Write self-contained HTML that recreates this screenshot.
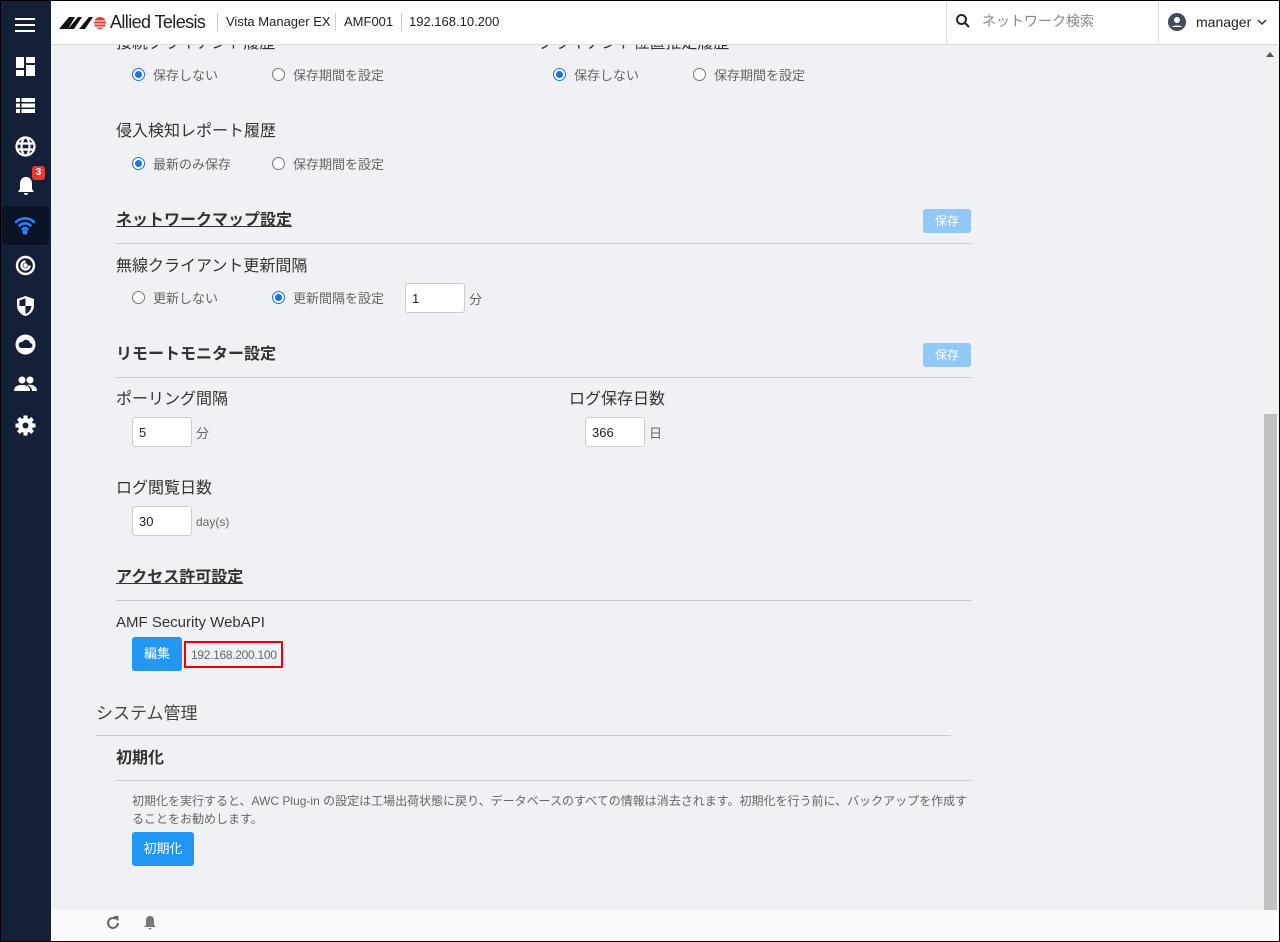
<!DOCTYPE html>
<html><head><meta charset="utf-8"><style>
*{box-sizing:border-box;margin:0;padding:0}
body{width:1280px;height:942px;overflow:hidden;background:#f0f1f5;font-family:"Liberation Sans","Noto Sans CJK JP",sans-serif;position:relative;color:#333;line-height:1.15}
.a{position:absolute;white-space:nowrap}
#side{left:0;top:0;width:51px;height:942px;background:#141f38}
#hdr{left:51px;top:0;width:1229px;height:45px;background:#fff;border-bottom:1px solid #ddd;z-index:5}
.z{z-index:6}
.h{font-size:16px;color:#333;transform:translateY(2px)}
.hb{font-size:16px;font-weight:bold;color:#333;transform:translateY(2px)}
.u{text-decoration:underline}
.r{font-size:13px;color:#666;transform:translateY(2px)}
.rad{position:absolute;width:13px;height:13px;border-radius:50%;border:1px solid #777;background:#fff}
.rad.on{border:1px solid #1a73e8}
.rad.on::after{content:"";position:absolute;left:2px;top:2px;width:7px;height:7px;border-radius:50%;background:#1a73e8}
.line{position:absolute;height:1px;background:#ccc}
.save{position:absolute;width:48px;height:24px;background:#90c8f6;border-radius:3px;color:#fff;font-size:12px;text-align:center;line-height:24px}
.inp{position:absolute;height:30px;background:#fff;border:1px solid #ccc;border-radius:3px;font-size:13px;padding:8px 0 0 6px;color:#222}
.btn{position:absolute;background:#2196f3;color:#fff;border-radius:3px;font-size:13px;text-align:center}
#frame{position:absolute;left:0;top:0;width:1280px;height:942px;border:1px solid #000;z-index:20;pointer-events:none}
</style></head><body>
<div class="a" id="side"></div>
<svg class="a" style="left:15px;top:17px" width="20" height="16"><rect y="1" width="20" height="2" fill="#fff"/><rect y="7" width="20" height="2" fill="#fff"/><rect y="13" width="20" height="2" fill="#fff"/></svg>
<svg class="a" style="left:16px;top:57px" width="19" height="19" fill="#fff"><rect x="0" y="0" width="8" height="11"/><rect x="10" y="0" width="9" height="6"/><rect x="0" y="13" width="8" height="6"/><rect x="10" y="8" width="9" height="11"/></svg>
<svg class="a" style="left:16px;top:98px" width="19" height="15" fill="#fff"><rect width="19" height="4"/><rect y="5.5" width="19" height="4"/><rect y="11" width="19" height="4"/><rect x="4" width="1.5" height="15" fill="#141f38"/></svg>
<svg class="a" style="left:15px;top:136px" width="21" height="21" fill="none" stroke="#fff" stroke-width="2.2"><circle cx="10.5" cy="10.5" r="9"/><ellipse cx="10.5" cy="10.5" rx="4" ry="9"/><line x1="1.5" y1="7.5" x2="19.5" y2="7.5"/><line x1="1.5" y1="13.5" x2="19.5" y2="13.5"/></svg>
<svg class="a" style="left:15px;top:175px" width="22" height="22" fill="#fff"><path d="M11 2c-4 0-6 3-6 7v5l-2 3h16l-2-3V9c0-4-2-7-6-7zM9 18h4a2 2 0 0 1-4 0z"/></svg>
<div class="a" style="left:32px;top:166px;width:13px;height:14px;background:#e53935;border-radius:3px;color:#fff;font-size:10px;font-weight:bold;text-align:center;line-height:14px">3</div>
<div class="a" style="left:2px;top:206px;width:47px;height:39px;background:#0b1326;border-radius:3px"></div>
<svg class="a" style="left:14px;top:215px" width="22" height="20" fill="none" stroke="#2f80ff" stroke-width="2.6" stroke-linecap="round"><path d="M2 7a13 13 0 0 1 18 0"/><path d="M5.5 10.5a8 8 0 0 1 11 0"/><path d="M8.5 14a3.5 3.5 0 0 1 5 0"/><circle cx="11" cy="17" r="1.3" fill="#2f80ff"/></svg>
<svg class="a" style="left:15px;top:255px" width="21" height="21" fill="none" stroke="#fff" stroke-width="2.4"><circle cx="10.5" cy="10.5" r="8.5"/><path d="M10.5 6.5a4 4 0 1 0 4 4"/><circle cx="10.5" cy="10.5" r="1" fill="#fff"/></svg>
<svg class="a" style="left:16px;top:295px" width="19" height="22"><path d="M9.5 1L18 4v6c0 6-4 10-8.5 11C5 20 1 16 1 10V4z" fill="#fff"/><path d="M9.5 11h6c-.5 4-3 7-6 8zM9.5 11h-6V5.5l6-2.3z" fill="#141f38"/></svg>
<svg class="a" style="left:15px;top:334px" width="21" height="21"><circle cx="10.5" cy="10.5" r="10" fill="#fff"/><path d="M6 14h9a2.5 2.5 0 0 0 0-5 4 4 0 0 0-7.5-1A3 3 0 0 0 6 14z" fill="#141f38"/></svg>
<svg class="a" style="left:14px;top:376px" width="23" height="16" fill="#fff"><circle cx="8" cy="4" r="3.5"/><circle cx="16" cy="4" r="3.5"/><path d="M0 15c0-5 4-6 8-6s8 1 8 6z"/><path d="M13 9c3-1 10 0 10 6h-5c0-3-2-5-5-6z"/></svg>
<svg class="a" style="left:15px;top:415px" width="21" height="21"><circle cx="10.5" cy="10.5" r="7.5" fill="#fff"/><g stroke="#fff" stroke-width="4"><line x1="10.5" y1="0.5" x2="10.5" y2="20.5"/><line x1="0.5" y1="10.5" x2="20.5" y2="10.5"/><line x1="3.4" y1="3.4" x2="17.6" y2="17.6"/><line x1="17.6" y1="3.4" x2="3.4" y2="17.6"/></g><circle cx="10.5" cy="10.5" r="3" fill="#141f38"/></svg>

<div class="a" id="hdr"></div>
<svg class="a z" style="left:59px;top:15px" width="50" height="15"><path d="M0 14L10 2h6l-7 12zM9 14L19 2h4L15 14z" fill="#111"/><path d="M20 14L30 2h4L26 14z" fill="#111"/><circle cx="41" cy="8" r="6" fill="#e53935"/><g stroke="#fff" stroke-width="1"><line x1="34" y1="6" x2="48" y2="6"/><line x1="34" y1="9" x2="48" y2="9"/><line x1="34" y1="12" x2="48" y2="12"/></g></svg>
<div class="a z" style="left:110px;top:12px;font-size:18px;color:#222;letter-spacing:-0.6px">Allied Telesis</div>
<div class="a z" style="left:217px;top:13px;width:1px;height:18px;background:#ccc"></div>
<div class="a z" style="left:226px;top:15px;font-size:13px;color:#222">Vista Manager EX</div>
<div class="a z" style="left:335px;top:13px;width:1px;height:18px;background:#ccc"></div>
<div class="a z" style="left:344px;top:15px;font-size:13px;color:#222">AMF001</div>
<div class="a z" style="left:401px;top:13px;width:1px;height:18px;background:#ccc"></div>
<div class="a z" style="left:409px;top:15px;font-size:13px;color:#222">192.168.10.200</div>
<div class="a z" style="left:946px;top:0;width:1px;height:45px;background:#ddd"></div>
<svg class="a z" style="left:956px;top:14px" width="14" height="15" fill="none" stroke="#222" stroke-width="2"><circle cx="5.5" cy="5.5" r="4.5"/><line x1="9" y1="9" x2="13" y2="13"/></svg>
<div class="a z" style="left:982px;top:13px;font-size:14px;color:#888">ネットワーク検索</div>
<div class="a z" style="left:1158px;top:0;width:1px;height:45px;background:#ddd"></div>
<svg class="a z" style="left:1168px;top:13px" width="18" height="18"><circle cx="9" cy="9" r="9" fill="#444c5c"/><circle cx="9" cy="7" r="3" fill="#fff"/><path d="M3.5 14a7 4 0 0 1 11 0" fill="#fff"/></svg>
<div class="a z" style="left:1196px;top:14px;font-size:14px;color:#222">manager</div>
<svg class="a z" style="left:1257px;top:19px" width="10" height="7" fill="none" stroke="#333" stroke-width="1.5"><path d="M1 1l4 4 4-4"/></svg>

<div class="a" style="left:1262px;top:46px;width:17px;height:864px;background:#f1f1f1"></div>
<div class="a" style="left:1264px;top:414px;width:13px;height:496px;background:#c1c1c1"></div>
<svg class="a" style="left:1266px;top:52px" width="8" height="5"><path d="M0 5L4 0l4 5z" fill="#555"/></svg>

<div class="a h" style="left:116px;top:33px">接続クライアント履歴</div>
<div class="a h" style="left:538px;top:33px">クライアント位置推定履歴</div>
<div class="rad on" style="left:132px;top:68px"></div><div class="a r" style="left:153px;top:67px">保存しない</div>
<div class="rad" style="left:272px;top:68px"></div><div class="a r" style="left:293px;top:67px">保存期間を設定</div>
<div class="rad on" style="left:553px;top:68px"></div><div class="a r" style="left:574px;top:67px">保存しない</div>
<div class="rad" style="left:693px;top:68px"></div><div class="a r" style="left:714px;top:67px">保存期間を設定</div>

<div class="a h" style="left:116px;top:121px">侵入検知レポート履歴</div>
<div class="rad on" style="left:132px;top:157px"></div><div class="a r" style="left:153px;top:156px">最新のみ保存</div>
<div class="rad" style="left:272px;top:157px"></div><div class="a r" style="left:293px;top:156px">保存期間を設定</div>

<div class="a hb u" style="left:116px;top:210px">ネットワークマップ設定</div>
<div class="save" style="left:923px;top:209px">保存</div>
<div class="line" style="left:116px;top:243px;width:855px"></div>
<div class="a h" style="left:116px;top:256px">無線クライアント更新間隔</div>
<div class="rad" style="left:132px;top:291px"></div><div class="a r" style="left:153px;top:290px">更新しない</div>
<div class="rad on" style="left:272px;top:291px"></div><div class="a r" style="left:293px;top:290px">更新間隔を設定</div>
<div class="inp" style="left:405px;top:283px;width:60px">1</div><div class="a r" style="left:469px;top:291px">分</div>

<div class="a hb" style="left:116px;top:344px">リモートモニター設定</div>
<div class="save" style="left:923px;top:343px">保存</div>
<div class="line" style="left:116px;top:377px;width:855px"></div>
<div class="a h" style="left:116px;top:389px">ポーリング間隔</div>
<div class="inp" style="left:132px;top:417px;width:60px">5</div><div class="a r" style="left:196px;top:425px">分</div>
<div class="a h" style="left:569px;top:389px">ログ保存日数</div>
<div class="inp" style="left:585px;top:417px;width:60px">366</div><div class="a r" style="left:649px;top:425px">日</div>
<div class="a h" style="left:116px;top:478px">ログ閲覧日数</div>
<div class="inp" style="left:132px;top:506px;width:60px">30</div><div class="a r" style="left:196px;top:514px;font-size:12px">day(s)</div>

<div class="a hb u" style="left:116px;top:567px">アクセス許可設定</div>
<div class="line" style="left:116px;top:600px;width:855px"></div>
<div class="a h" style="left:116px;top:612px;font-size:15px">AMF Security WebAPI</div>
<div class="btn" style="left:132px;top:637px;width:50px;height:34px;line-height:34px">編集</div>
<div class="a" style="left:184px;top:641px;width:99px;height:27px;border:2px solid #e00;font-size:12px;color:#666;padding:6px 0 0 5px;letter-spacing:-0.3px">192.168.200.100</div>

<div class="a" style="left:96px;top:704px;font-size:17px;color:#444">システム管理</div>
<div class="line" style="left:96px;top:735px;width:855px"></div>
<div class="a hb" style="left:116px;top:748px">初期化</div>
<div class="line" style="left:116px;top:780px;width:855px"></div>
<div class="a" style="left:132px;top:792px;font-size:12px;color:#666;line-height:18px;white-space:normal;width:840px">初期化を実行すると、AWC Plug-in の設定は工場出荷状態に戻り、データベースのすべての情報は消去されます。初期化を行う前に、バックアップを作成することをお勧めします。</div>
<div class="btn" style="left:132px;top:832px;width:62px;height:34px;line-height:34px">初期化</div>

<div class="a" style="left:51px;top:910px;width:1228px;height:31px;background:#fafafa"></div>
<svg class="a" style="left:105px;top:915px" width="16" height="16" fill="none" stroke="#666" stroke-width="2"><path d="M13 8a5 5 0 1 1-2-4"/><path d="M9 2h3.5v3.5" /></svg>
<svg class="a" style="left:143px;top:915px" width="14" height="16" fill="#777"><path d="M7 1c-3 0-4 2-4 5v4l-2 2h12l-2-2V6c0-3-1-5-4-5zM5.5 13h3a1.5 1.5 0 0 1-3 0z"/></svg>
<div id="frame"></div>
</body></html>
